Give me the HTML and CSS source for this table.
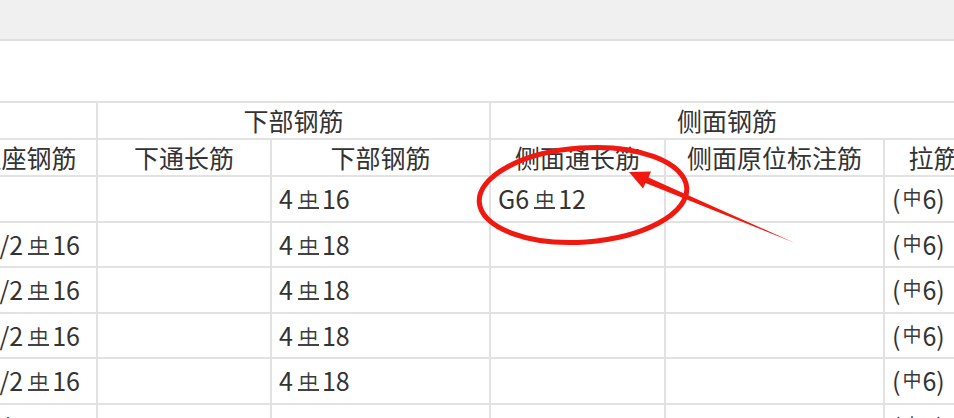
FILE: index.html
```html
<!DOCTYPE html>
<html lang="zh-CN">
<head>
<meta charset="utf-8">
<title>钢筋表</title>
<link rel="stylesheet" href="styles.css">
</head>
<body>
<div class="topbar"></div>
<div class="toolbar-space"></div>
<div class="grid-wrap">
  <table class="grid">
    <colgroup>
      <col class="c0"><col class="c1"><col class="c2"><col class="c3"><col class="c4"><col class="c5">
    </colgroup>
    <thead>
      <tr class="hrow">
        <th></th>
        <th colspan="2">下部钢筋</th>
        <th colspan="3" class="side-group">侧面钢筋</th>
      </tr>
      <tr class="hrow">
        <th class="h-left">支座钢筋</th>
        <th>下通长筋</th>
        <th>下部钢筋</th>
        <th>侧面通长筋</th>
        <th>侧面原位标注筋</th>
        <th class="h-tie">拉筋</th>
      </tr>
    </thead>
    <tbody>
      <tr>
        <td class="left"></td><td></td>
        <td>4<span class="g3">中</span>16</td>
        <td>G6<span class="g3">中</span>12</td>
        <td></td>
        <td>(<span class="g1">中</span>6)</td>
      </tr>
      <tr>
        <td class="left">2/2<span class="g3">中</span>16</td><td></td>
        <td>4<span class="g3">中</span>18</td>
        <td></td><td></td>
        <td>(<span class="g1">中</span>6)</td>
      </tr>
      <tr>
        <td class="left">2/2<span class="g3">中</span>16</td><td></td>
        <td>4<span class="g3">中</span>18</td>
        <td></td><td></td>
        <td>(<span class="g1">中</span>6)</td>
      </tr>
      <tr>
        <td class="left">2/2<span class="g3">中</span>16</td><td></td>
        <td>4<span class="g3">中</span>18</td>
        <td></td><td></td>
        <td>(<span class="g1">中</span>6)</td>
      </tr>
      <tr>
        <td class="left">2/2<span class="g3">中</span>16</td><td></td>
        <td>4<span class="g3">中</span>18</td>
        <td></td><td></td>
        <td>(<span class="g1">中</span>6)</td>
      </tr>
      <tr>
        <td class="left">2/2<span class="g3">中</span>16</td><td></td>
        <td>4<span class="g3">中</span>18</td>
        <td></td><td></td>
        <td>(<span class="g1">中</span>6)</td>
      </tr>
    </tbody>
  </table>
  <svg class="markup" width="954" height="320" viewBox="0 101 954 320" aria-hidden="true">
    <ellipse cx="583" cy="195" rx="104" ry="47" transform="rotate(-4 583 195)" fill="none" stroke="#f0180f" stroke-width="5"/>
    <polygon points="629,172 651,171.5 648.5,177.5 795,243 645.5,183 643,188.5" fill="#f0180f"/>
  </svg>
</div>
</body>
</html>
```
FILE: styles.css
```css
html, body {
  margin: 0;
  padding: 0;
  overflow: hidden;
  background: #ffffff;
}

body {
  font-family: "Noto Sans CJK SC", "Noto Sans", sans-serif;
  color: #333333;
}

.topbar {
  height: 39px;
  background: #f0f0f0;
  border-bottom: 2px solid #dedede;
}

.toolbar-space {
  height: 60px;
}

.grid-wrap {
  position: relative;
  overflow: hidden;
  width: 954px;
  height: 320px;
}

.grid {
  margin-left: -45px;
  border-collapse: collapse;
  table-layout: fixed;
  width: 1008px;
  font-size: 25px;
}

.c0 { width: 141px; }
.c1 { width: 174px; }
.c2 { width: 219px; }
.c3 { width: 175px; }
.c4 { width: 219px; }
.c5 { width: 80px; }

.grid th,
.grid td {
  border: 2px solid #e2e2e2;
  padding: 0 7px;
  white-space: nowrap;
  overflow: hidden;
}

.grid th {
  font-weight: normal;
  text-align: center;
  height: 35px;
  line-height: 35px;
}

.grid th.h-tie {
  padding-left: 19px;
  padding-right: 0;
}

.grid td {
  height: 43.5px;
  line-height: 43px;
  text-align: left;
}

.grid td.left {
  text-align: right;
  padding-right: 16px;
}

.g3 {
  display: inline-block;
  font-size: 19px;
  line-height: 16px;
  height: 16px;
  padding: 0 1px;
  margin: 0 3px 0 5px;
  color: #3a3a3a;
  border-bottom: 2px solid #444444;
  vertical-align: 2px;
}

.g1 {
  display: inline-block;
  font-size: 19px;
  line-height: 18px;
  margin: 0 1px 0 2px;
  color: #3a3a3a;
  vertical-align: 4px;
}

.markup {
  position: absolute;
  left: 0;
  top: 0;
  pointer-events: none;
}
```
